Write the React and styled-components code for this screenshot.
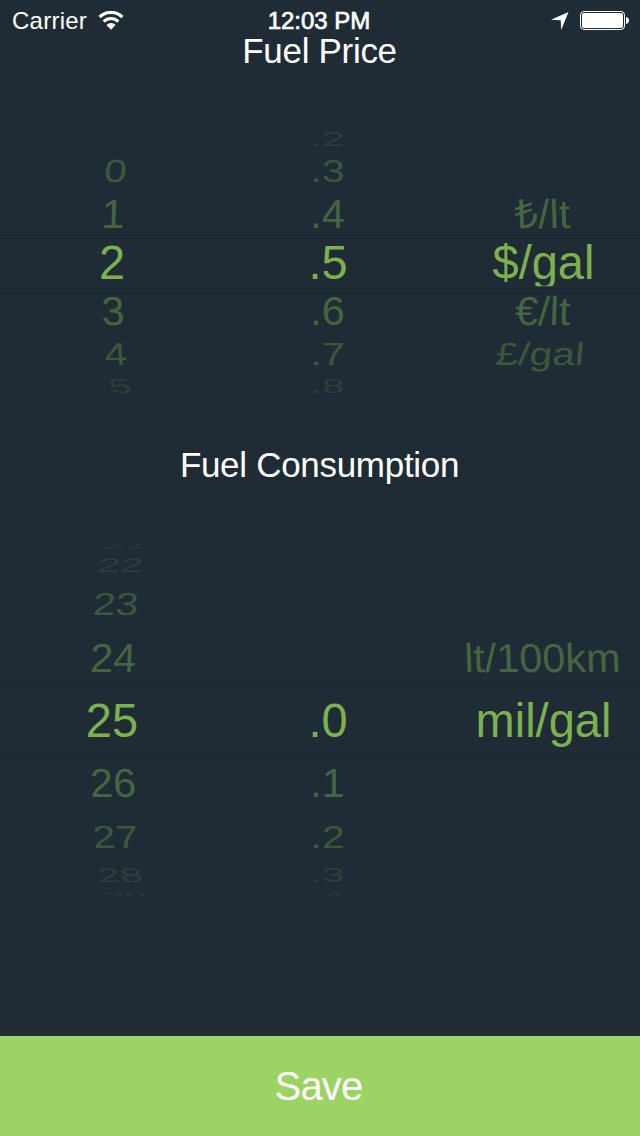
import React from 'react'
import styled, { createGlobalStyle } from 'styled-components'

const GlobalStyle = createGlobalStyle`
  body {
    margin: 0;
    background-color: #202c35;
    font-family: 'Liberation Sans', Arial, sans-serif;
  }
`

const Screen = styled.main`
  display: flex;
  flex-direction: column;
  width: 640px;
  height: 1136px;
  overflow: hidden;
  background-color: #202c35;
  color: #fff;
`

const StatusBar = styled.header`
  display: grid;
  grid-template-columns: 1fr auto 1fr;
  align-items: center;
  height: 41px;
  padding: 0 11px 0 12px;
  font-size: 24px;
  line-height: 24px;
`

const Carrier = styled.div`
  display: flex;
  align-items: center;
  gap: 11px;
  letter-spacing: 0.25px;
`

const Clock = styled.div`
  padding-right: 3px;
  -webkit-text-stroke: 0.7px #fff;
`

const Indicators = styled.div`
  display: flex;
  align-items: center;
  justify-content: flex-end;
  gap: 11px;
`

const Title = styled.h1`
  margin: ${(p) => p.$top || 0}px 0 0;
  padding-right: 1px;
  font-size: 35px;
  font-weight: 400;
  line-height: 19px;
  letter-spacing: -0.3px;
  text-align: center;
`

const Picker = styled.section`
  display: grid;
  grid-template-columns: 224px 208px 208px;
  margin-top: ${(p) => p.$top}px;
`

const Wheel = styled.ul`
  margin: 0;
  padding: 0;
  list-style: none;
  overflow: hidden;
`

const Row = styled.li`
  display: flex;
  align-items: center;
  justify-content: center;
  height: ${(p) => p.$height}px;
  color: ${(p) => p.$color};
`

const SelectedRow = styled(Row)`
  border-top: 1px solid #19242c;
  border-bottom: 1px solid #19242c;
`

const Label = styled.span`
  font-size: 47px;
  line-height: ${(p) => p.$line}px;
  white-space: nowrap;
  transform: translate(${(p) => p.$x}px, ${(p) => p.$y}px) skewX(${(p) => p.$skew}deg)
    scale(${(p) => p.$sx}, ${(p) => p.$sy});
`

const SelectedLabel = styled(Label)`
  clip-path: inset(0 0 3px);
`

const SaveButton = styled.button`
  height: 100px;
  margin-top: auto;
  padding: 1px 3px 0 0;
  border: 0;
  background-color: #9bd365;
  color: #fff;
  font-family: inherit;
  font-size: 40px;
  letter-spacing: -0.8px;
`

// how a row looks by its distance from the selected one
const TILT = [
  { sx: 1, sy: 1.01, skew: 0, x: 0, y: 1, color: '#7cb14e' },
  { sx: 0.88, sy: 0.86, skew: 2, x: 1, y: 0.5, color: '#456540' },
  { sx: 0.87, sy: 0.68, skew: 5, x: 3.5, y: 0, color: '#3d573d' },
  { sx: 0.86, sy: 0.42, skew: 14, x: 8, y: 0, color: '#2d3f39' },
  { sx: 0.84, sy: 0.24, skew: 28, x: 13.5, y: 4, color: '#293837' },
]

const PRICE = {
  heights: [21, 43, 43, 52, 44, 41, 24],
  wheels: [
    { lean: 1, x: 0, items: ['', '0', '1', '2', '3', '4', '5'] },
    { lean: 0, x: 0, items: ['.2', '.3', '.4', '.5', '.6', '.7', '.8'] },
    { lean: -1, x: 7.5, items: ['', '', '₺/lt', '$/gal', '€/lt', '£/gal', ''] },
  ],
}

const CONSUMPTION = {
  heights: [9, 24, 53, 55, 68, 56, 52, 24, 9],
  wheels: [
    { lean: 1, x: 0, items: ['21', '22', '23', '24', '25', '26', '27', '28', '29'] },
    { lean: 0, x: 0, items: ['', '', '', '', '.0', '.1', '.2', '.3', '.4'] },
    { lean: -1, x: 7.5, items: ['', '', '', 'lt/100km', 'mil/gal', '', '', '', ''] },
  ],
}

function WheelPicker({ data, top }) {
  const middle = (data.heights.length - 1) / 2

  return (
    <Picker $top={top}>
      {data.wheels.map((wheel, w) => (
        <Wheel key={w}>
          {wheel.items.map((text, i) => {
            const distance = Math.abs(i - middle)
            const side = Math.sign(i - middle)
            const tilt = TILT[distance]
            const RowType = distance === 0 ? SelectedRow : Row
            const LabelType = distance === 0 ? SelectedLabel : Label
            return (
              <RowType key={i} $height={data.heights[i]} $color={tilt.color}>
                <LabelType
                  $line={data.heights[middle]}
                  $x={wheel.x + wheel.lean * tilt.x}
                  $y={distance === 4 ? side * tilt.y : tilt.y}
                  $skew={side * wheel.lean * tilt.skew}
                  $sx={tilt.sx}
                  $sy={tilt.sy}
                >
                  {text}
                </LabelType>
              </RowType>
            )
          })}
        </Wheel>
      ))}
    </Picker>
  )
}

const WifiIcon = () => (
  <svg width="26" height="19" viewBox="0 0 26 19" fill="none" stroke="#fff">
    <path d="M1.6 6.1a16.2 16.2 0 0 1 22.8 0" strokeWidth="3.2" />
    <path d="M5.7 10.6a10.3 10.3 0 0 1 14.6 0" strokeWidth="3" />
    <path d="M13 18.8L8.4 14a6.4 6.4 0 0 1 9.2 0z" fill="#fff" stroke="none" />
  </svg>
)

const LocationIcon = () => (
  <svg width="18" height="18" viewBox="0 0 18 18" fill="#fff">
    <path d="M17.5 0L10.2 18L9.7 8.3L0 7.7z" />
  </svg>
)

const BatteryIcon = () => (
  <svg width="49" height="19" viewBox="0 0 49 19" fill="#fff">
    <rect x="0.5" y="0.5" width="44" height="18" rx="3.5" fill="none" stroke="#fff" />
    <rect x="2" y="2" width="41" height="15" rx="2" />
    <path d="M46 6c2 0.4 3 1.6 3 3.5s-1 3.1-3 3.5z" />
  </svg>
)

export default function App() {
  return (
    <Screen>
      <GlobalStyle />
      <StatusBar>
        <Carrier>
          Carrier
          <WifiIcon />
        </Carrier>
        <Clock>12:03 PM</Clock>
        <Indicators>
          <LocationIcon />
          <BatteryIcon />
        </Indicators>
      </StatusBar>
      <Title>Fuel Price</Title>
      <WheelPicker data={PRICE} top={68} />
      <Title $top={57}>Fuel Consumption</Title>
      <WheelPicker data={CONSUMPTION} top={70} />
      <SaveButton>Save</SaveButton>
    </Screen>
  )
}
